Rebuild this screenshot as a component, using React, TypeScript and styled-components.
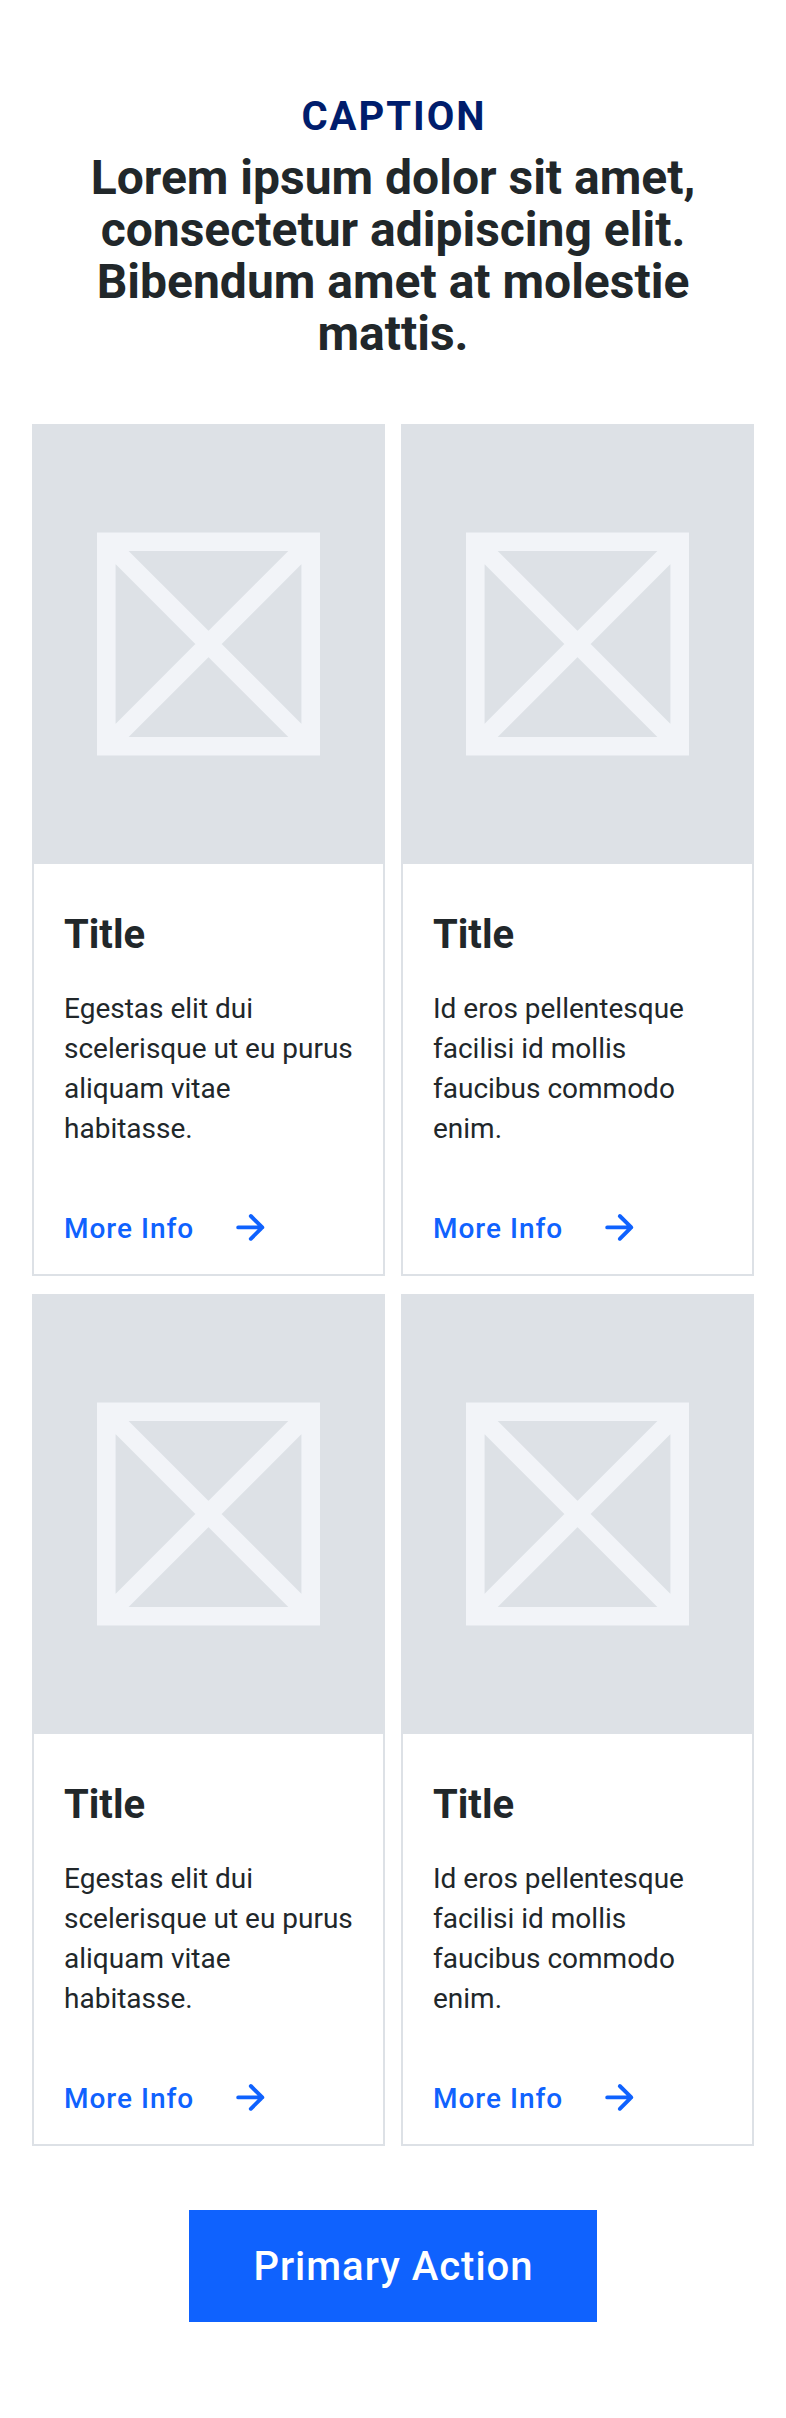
import React from "react";
import styled, { createGlobalStyle } from "styled-components";

const GlobalStyle = createGlobalStyle`
  *, *::before, *::after { box-sizing: border-box; }
  body {
    margin: 0;
    background: #ffffff;
    color: #21272a;
    font-family: Roboto, "Liberation Sans", sans-serif;
  }
`;

const Page = styled.main`
  display: flex;
  flex-direction: column;
  align-items: center;
  width: 786px;
  padding: 97px 32px 96px;
`;

const Header = styled.header`
  width: 100%;
  padding: 0 48px;
  margin-bottom: 64px;
  text-align: center;
`;

const Caption = styled.p`
  margin: 0 0 15px;
  padding-left: 2px;
  font-size: 40px;
  font-weight: 700;
  line-height: 40px;
  letter-spacing: 2px;
  color: #001d6c;
`;

const Heading = styled.h2`
  margin: 0;
  font-size: 48px;
  font-weight: 700;
  line-height: 52px;
`;

const CardGrid = styled.section`
  display: grid;
  grid-template-columns: 353px 353px;
  gap: 18px 16px;
  margin-bottom: 64px;
`;

const Card = styled.article`
  display: flex;
  flex-direction: column;
  height: 852px;
  border: 2px solid #dde1e6;
`;

const Media = styled.div`
  display: flex;
  align-items: center;
  justify-content: center;
  height: 438px;
  padding-bottom: 2px;
  background: #dde1e6;
`;

const Body = styled.div`
  display: flex;
  flex-direction: column;
  padding: 49px 30px 0;
`;

const Title = styled.h3`
  margin: 0 0 32px;
  font-size: 40px;
  font-weight: 700;
  line-height: 44px;
`;

const Text = styled.p`
  margin: 0;
  font-size: 28px;
  line-height: 40px;
`;

const MoreLink = styled.a`
  display: flex;
  align-items: center;
  gap: 32px;
  height: 56px;
  margin-top: 51px;
  font-size: 28px;
  font-weight: 500;
  line-height: 28px;
  letter-spacing: 1px;
  color: #0f62fe;
`;

const LinkLabel = styled.span`
  padding-top: 2px;
`;

const PrimaryButton = styled.button`
  width: 408px;
  height: 112px;
  padding: 2px 0 0 1px;
  border: 0;
  background: #0f62fe;
  color: #ffffff;
  font-family: inherit;
  font-size: 40px;
  font-weight: 500;
  line-height: 40px;
  letter-spacing: 1px;
`;

const Placeholder = () => (
  <svg width="223" height="224" viewBox="0 0 12 12" fill="none" stroke="#f2f4f8">
    <path d="M.5 .5h11v11H.5zM.5 .5l11 11M11.5 .5l-11 11" />
  </svg>
);

const Arrow = () => (
  <svg
    width="48"
    height="48"
    viewBox="0 0 48 48"
    fill="none"
    stroke="#0f62fe"
    strokeWidth="3.9"
    strokeLinecap="round"
    strokeLinejoin="round"
  >
    <path d="M12.2 23.4h24M24.8 12L36.3 23.4L24.8 34.8" />
  </svg>
);

const first = "Egestas elit dui scelerisque ut eu purus aliquam vitae habitasse.";
const second = "Id eros pellentesque facilisi id mollis faucibus commodo enim.";
const cards = [first, second, first, second];

export default function App() {
  return (
    <>
      <GlobalStyle />
      <Page>
        <Header>
          <Caption>CAPTION</Caption>
          <Heading>
            Lorem ipsum dolor sit amet, consectetur adipiscing elit. Bibendum amet at molestie mattis.
          </Heading>
        </Header>
        <CardGrid>
          {cards.map((text, i) => (
            <Card key={i}>
              <Media>
                <Placeholder />
              </Media>
              <Body>
                <Title>Title</Title>
                <Text>{text}</Text>
                <MoreLink>
                  <LinkLabel>More Info</LinkLabel>
                  <Arrow />
                </MoreLink>
              </Body>
            </Card>
          ))}
        </CardGrid>
        <PrimaryButton>Primary Action</PrimaryButton>
      </Page>
    </>
  );
}
